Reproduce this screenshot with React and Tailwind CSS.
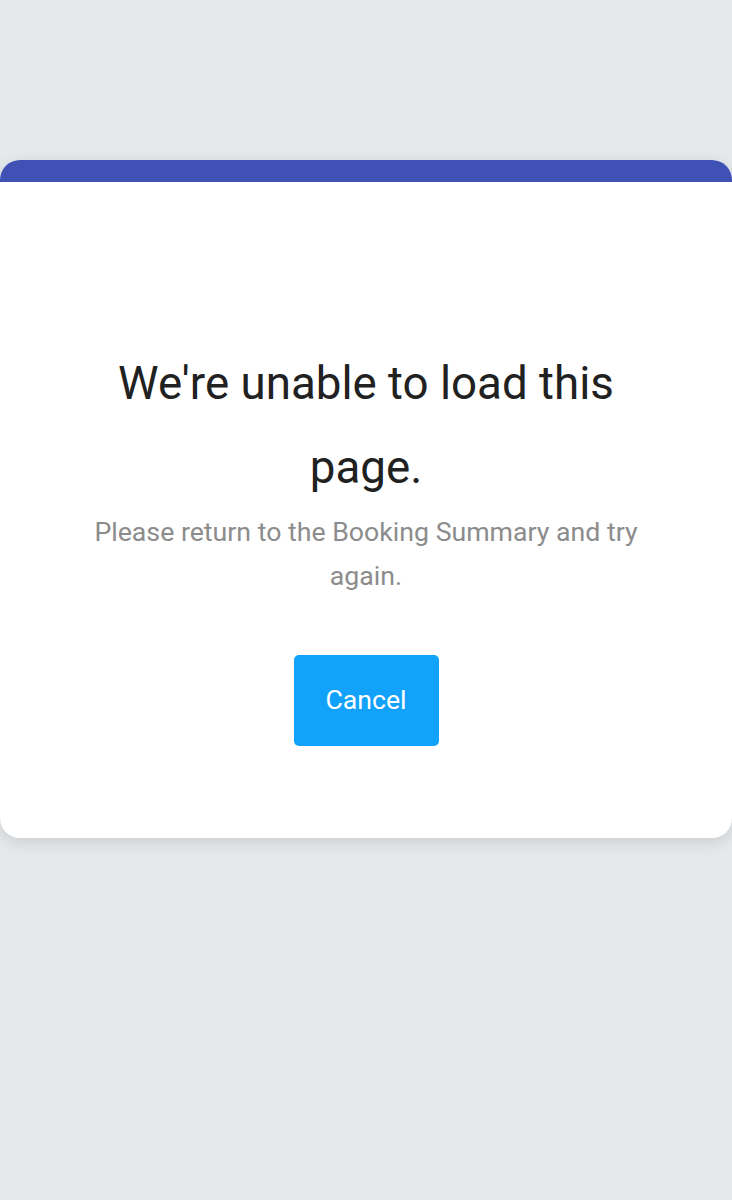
export default function App() {
  return (
    <div
      className="min-h-[1200px] bg-[#e5e9ec] pt-[160px]"
      style={{ fontFamily: "Roboto, 'Noto Sans', sans-serif" }}
    >
      <div className="overflow-hidden rounded-[20px] bg-white shadow-[0_4px_16px_rgba(0,0,0,0.12)]">
        <div className="h-[22px] bg-[#3f51b5]" />
        <div className="flex flex-col items-center px-[90px] pt-[160px] pb-[92px] text-center">
          <h1 className="text-[45.7px] leading-[84px] font-normal text-[#212121]">
            We're unable to load this page.
          </h1>
          <p className="text-[26.7px] leading-[44px] text-[#8c8c8c]">
            Please return to the Booking Summary and try again.
          </p>
          <button className="mt-[57px] h-[91px] w-[145px] rounded-[5px] bg-[#12a1fb] text-[26.7px] text-white">
            Cancel
          </button>
        </div>
      </div>
    </div>
  );
}
